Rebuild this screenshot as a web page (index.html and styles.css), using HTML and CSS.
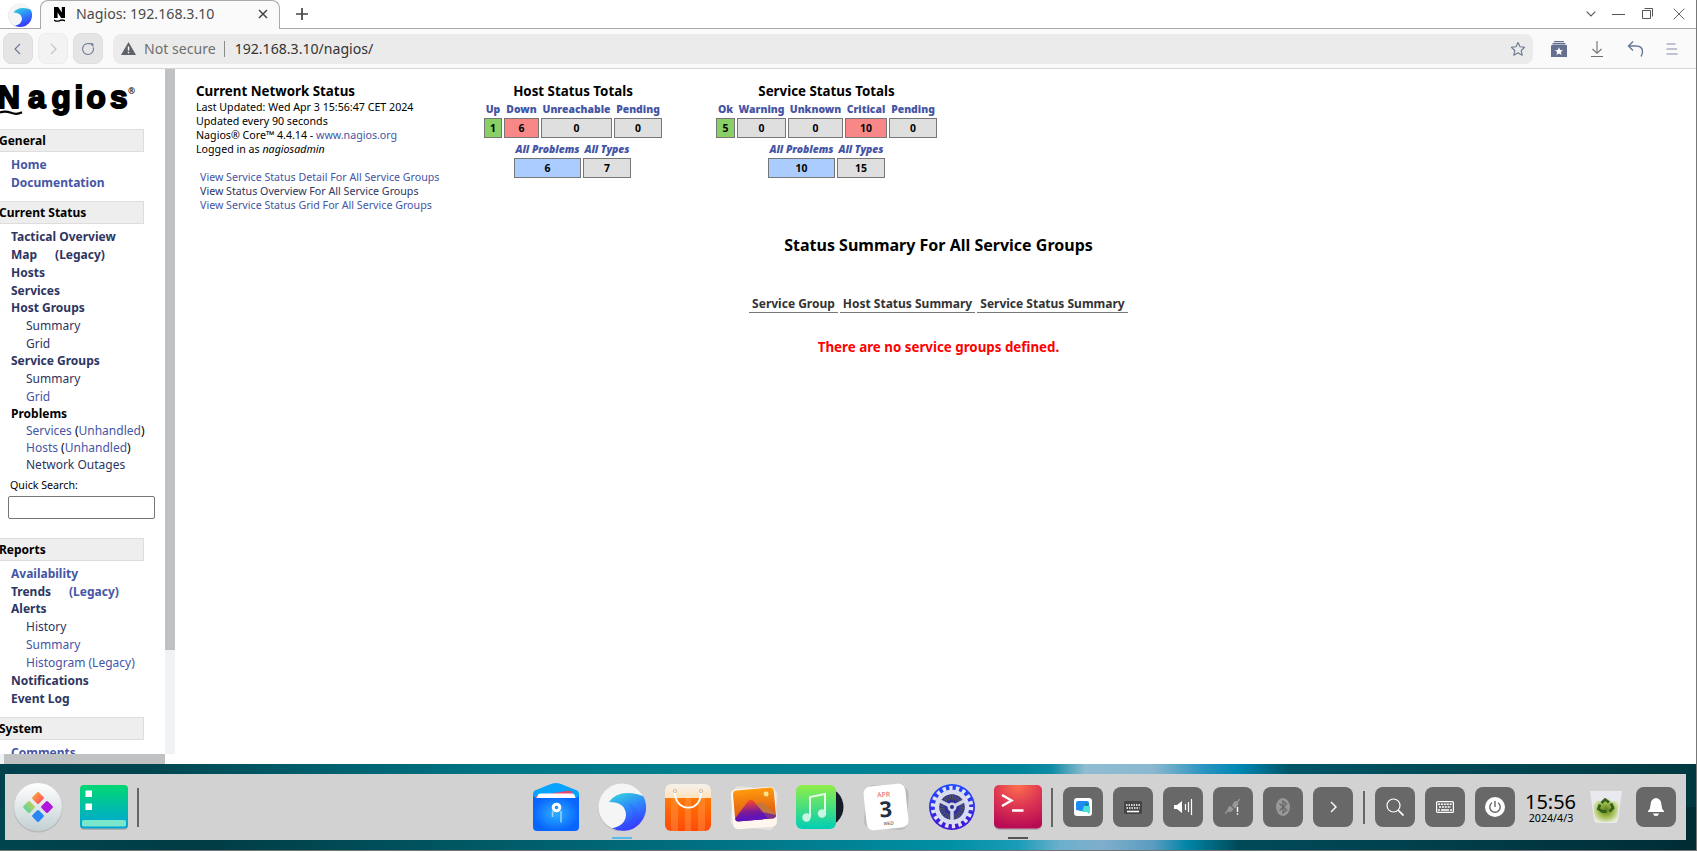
FILE: index.html
```
<!DOCTYPE html>
<html lang="en">
<head>
<meta charset="utf-8">
<title>Nagios: 192.168.3.10</title>
<link rel="stylesheet" href="styles.css">
</head>
<body>
<div class="window">
  <header class="tabstrip">
    <svg class="browser-logo" width="24" height="24" viewBox="0 0 48 48"><use href="#wave"/></svg>
    <div class="tab">
      <svg width="12" height="15" viewBox="0 0 12 15"><path d="M0 0h4.200l3.600 5.500V0H11v11H7.200L3.600 5.600V11H0zM0 12.500q3 1.600 5.500 .4t5.500 .2v1.300q-3-1.100-5.500 0T0 14z" fill="#000"/></svg>
      <span class="tab-title">Nagios: 192.168.3.10</span>
      <svg width="10" height="10" viewBox="0 0 10 10"><path d="M1 1l8 8M9 1l-8 8" stroke="#444" stroke-width="1.500"/></svg>
    </div>
    <svg class="newtab" width="12" height="12" viewBox="0 0 12 12"><path d="M6 0v12M0 6h12" stroke="#444" stroke-width="1.700"/></svg>
    <div class="wincontrols">
      <svg width="10" height="6" viewBox="0 0 10 6"><path d="M.7 .7L5 5L9.300 .7" fill="none" stroke="#555a62" stroke-width="1.200"/></svg>
      <svg width="13" height="12" viewBox="0 0 13 12"><path d="M0 6.500h13" stroke="#555"/></svg>
      <svg width="12" height="12" viewBox="0 0 12 12"><path d="M.5 2.500h8v8h-8zM2.500 .5h8v8" fill="none" stroke="#555"/></svg>
      <svg width="12" height="12" viewBox="0 0 12 12"><path d="M.7 .7l10.600 10.600M11.300 .7L.7 11.300" stroke="#666"/></svg>
    </div>
  </header>
  <div class="toolbar">
    <span class="navbtn"><svg width="10" height="12" viewBox="0 0 10 12"><path d="M7 1L2 6l5 5" fill="none" stroke="#68778f" stroke-width="1.100"/></svg></span>
    <span class="navbtn off"><svg width="10" height="12" viewBox="0 0 10 12"><path d="M3 1l5 5l-5 5" fill="none" stroke="#c0c4cc" stroke-width="1.100"/></svg></span>
    <span class="navbtn"><svg width="14" height="14" viewBox="0 0 14 14"><path d="M12.300 5.500A5.500 5.500 0 1 1 9.500 2.100" fill="none" stroke="#68778f" stroke-width="1.100"/><path d="M8.500 .8l3.800 .6v3.800z" fill="#68778f"/></svg></span>
    <div class="address">
      <svg width="15" height="13" viewBox="0 0 15 13"><path d="M7.500 0L15 13H0z" fill="#5f6368"/><path d="M7.500 4.500v4M7.500 9.700v1.500" stroke="#fff" stroke-width="1.400"/></svg>
      <span class="insecure">Not secure</span><span class="url">192.168.3.10/nagios/</span>
      <svg class="star" width="16" height="16" viewBox="0 0 16 16"><path d="M8 1.500l2 4.300 4.600.5-3.400 3.200 1 4.700L8 11.800l-4.200 2.400 1-4.700L1.400 6.300 6 5.800z" fill="none" stroke="#68778f" stroke-width="1.100" stroke-linejoin="round"/></svg>
    </div>
    <svg class="tb1" width="16" height="16" viewBox="0 0 16 16"><path d="M3 0h10v1.200H3zM1.500 2h13v1.500h-13zM0 5q0-1 1-1h14q1 0 1 1v11H0z" fill="#66708f"/><path d="M8 6.300l1.200 2.600 2.800.3-2.100 1.900.6 2.800L8 12.500l-2.500 1.400.6-2.800L4 9.200l2.800-.3z" fill="#fff"/></svg>
    <svg class="tb2" width="12" height="16" viewBox="0 0 12 16"><path d="M6 0v12M1.500 8L6 12.300 10.500 8M0 15.500h12" fill="none" stroke="#6c6f74" stroke-width="1.100"/></svg>
    <svg class="tb3" width="18" height="16" viewBox="0 0 18 16"><path d="M6 .5L1.500 5 6 9.500M1.500 5H9q6.500 0 6.500 5.500 0 3-1.500 5" fill="none" stroke="#68779a" stroke-width="1.400"/></svg>
    <svg class="tb4" width="12" height="12" viewBox="0 0 12 12"><path d="M.5 1h9M.5 6h6M.5 11h11M6 6h5" stroke="#a9b1c4" stroke-width="1.600"/></svg>
  </div>
  <div class="frames">
    <div class="side">
      <div class="sideframe">
        <nav class="sidebar">
          <svg class="logo" width="144" height="60" viewBox="0 0 144 60">
            <text class="logotext" y="38.500" font-size="31"><tspan x="-2.500">N</tspan><tspan x="28 51.500 74.500 86.500 110" font-size="31.500">agios</tspan></text>
            <path d="M0 43.500q5-2 11 .3t11-.5" fill="none" stroke="#000" stroke-width="2.200"/>
            <text class="logoreg" x="128" y="25">®</text>
          </svg>
          <h2>General</h2>
          <ul>
            <li><a>Home</a></li>
            <li><a>Documentation</a></li>
          </ul>
          <h2>Current Status</h2>
          <ul>
            <li class="seen"><a>Tactical Overview</a></li>
            <li class="seen"><a>Map</a><a class="legacy">(Legacy)</a></li>
            <li class="seen"><a>Hosts</a></li>
            <li class="seen tight"><a>Services</a></li>
            <li class="seen"><a>Host Groups</a></li>
            <li class="sub seen"><a>Summary</a></li>
            <li class="sub seen tight"><a>Grid</a></li>
            <li class="seen"><a>Service Groups</a></li>
            <li class="sub seen"><a>Summary</a></li>
            <li class="sub tight"><a>Grid</a></li>
            <li class="plain tight">Problems</li>
            <li class="sub tight"><a>Services</a> (<a>Unhandled</a>)</li>
            <li class="sub tight"><a>Hosts</a> (<a>Unhandled</a>)</li>
            <li class="sub seen tight"><a>Network Outages</a></li>
          </ul>
          <label class="search">Quick Search:<input type="text"></label>
          <h2>Reports</h2>
          <ul>
            <li><a>Availability</a></li>
            <li class="tight"><a class="visited">Trends</a><a class="legacy">(Legacy)</a></li>
            <li class="seen"><a>Alerts</a></li>
            <li class="sub seen"><a>History</a></li>
            <li class="sub"><a>Summary</a></li>
            <li class="sub"><a>Histogram (Legacy)</a></li>
            <li class="seen"><a>Notifications</a></li>
            <li class="seen"><a>Event Log</a></li>
          </ul>
          <h2>System</h2>
          <ul><li><a>Comments</a></li></ul>
        </nav>
        <div class="vscroll"><div class="vthumb"></div></div>
      </div>
      <div class="hscroll"><div class="hthumb"></div></div>
    </div>
    <main class="main">
      <div class="top">
        <section class="info">
          <h1>Current Network Status</h1>
          <p>Last Updated: Wed Apr 3 15:56:47 CET 2024</p>
          <p>Updated every 90 seconds</p>
          <p>Nagios® Core™ 4.4.14 - <a>www.nagios.org</a></p>
          <p>Logged in as <i>nagiosadmin</i></p>
          <div class="views">
            <p><a>View Service Status Detail For All Service Groups</a></p>
            <p class="seen"><a>View Status Overview For All Service Groups</a></p>
            <p><a>View Service Status Grid For All Service Groups</a></p>
          </div>
        </section>
        <section class="totals host">
          <h1>Host Status Totals</h1>
          <div class="grid main-grid">
            <b>Up</b><b>Down</b><b>Unreachable</b><b>Pending</b>
            <span class="ok">1</span><span class="bad">6</span><span>0</span><span>0</span>
          </div>
          <div class="grid sum-grid"><b>All Problems</b><b>All Types</b><span class="prob">6</span><span>7</span></div>
        </section>
        <section class="totals service">
          <h1>Service Status Totals</h1>
          <div class="grid main-grid">
            <b>Ok</b><b>Warning</b><b>Unknown</b><b>Critical</b><b>Pending</b>
            <span class="ok">5</span><span>0</span><span>0</span><span class="bad">10</span><span>0</span>
          </div>
          <div class="grid sum-grid"><b>All Problems</b><b>All Types</b><span class="prob">10</span><span>15</span></div>
        </section>
      </div>
      <h2 class="title">Status Summary For All Service Groups</h2>
      <div class="columns"><span>Service Group</span><span>Host Status Summary</span><span>Service Status Summary</span></div>
      <p class="error">There are no service groups defined.</p>
    </main>
  </div>
</div>
<div class="desktop">
  <div class="dock">
    <svg class="launcher" width="52" height="52" viewBox="0 0 52 52">
      <defs>
        <linearGradient id="lg" x2="0" y2="1"><stop offset="0" stop-color="#fff"/><stop offset="1" stop-color="#c3d0d3"/></linearGradient>
        <linearGradient id="or"><stop stop-color="#ff9a3c"/><stop offset="1" stop-color="#ff5a5f"/></linearGradient>
        <linearGradient id="gr" x2="0" y2="1"><stop stop-color="#b6d25c"/><stop offset="1" stop-color="#5fd39b"/></linearGradient>
      </defs>
      <circle cx="26" cy="27" r="24.500" fill="#aaa" opacity=".6"/><circle cx="26" cy="26" r="24" fill="url(#lg)"/>
      <rect x="-4.600" y="-4.600" width="9.200" height="9.200" rx="1.500" transform="translate(26 17) rotate(45)" fill="url(#or)"/>
      <rect x="-4.600" y="-4.600" width="9.200" height="9.200" rx="1.500" transform="translate(17 26) rotate(45)" fill="url(#gr)"/>
      <rect x="-4.600" y="-4.600" width="9.200" height="9.200" rx="1.500" transform="translate(35 26) rotate(45)" fill="#b115dc"/>
      <rect x="-4.600" y="-4.600" width="9.200" height="9.200" rx="1.500" transform="translate(26 35) rotate(45)" fill="#2a86f5"/>
    </svg>
    <svg class="multitask" width="48" height="48" viewBox="0 0 48 48">
      <defs><linearGradient id="mt" x2="0" y2="1"><stop stop-color="#00d873"/><stop offset=".8" stop-color="#00aec4"/><stop offset="1" stop-color="#009fd0"/></linearGradient></defs>
      <rect y="3" width="48" height="44" rx="4" fill="#999" opacity=".6"/><rect y="2" width="48" height="43.500" rx="4" fill="url(#mt)"/>
      <path d="M5.500 7.500h6.500v6.500H5.500zM5.500 20.500h6.500v6.500H5.500z" fill="#fff"/><rect x="2" y="37" width="44" height="6.500" rx="1.500" fill="#7ae6cb"/>
    </svg>
    <i class="sep s1"></i>
    <div class="apps">
      <svg width="48" height="50" viewBox="0 0 48 50">
        <defs><radialGradient id="fm"><stop stop-color="#2db0ff"/><stop offset="1" stop-color="#0866ff"/></radialGradient></defs>
        <path d="M1 12q0-3 3-4L19 2q5-2 10 0l15 6q3 1 3 4v10H1z" fill="#06a4ff"/>
        <path d="M4 14l30-5q4-1 6 1l3 6H3z" fill="#e8466c"/><path d="M6 13q0-1.500 3-1.500h31q3 0 3.500 5H4z" fill="#fff"/>
        <path d="M1 14l3 2h40l3-2v31q0 4-4 4H5q-4 0-4-4z" fill="url(#fm)"/><circle cx="24.500" cy="25.500" r="3.300" fill="none" stroke="#fff" stroke-width="3"/>
        <path d="M20.500 29v6M29 29v11.500" stroke="#9bd6ff" stroke-width="1.500"/>
      </svg>
      <svg width="48" height="48" viewBox="0 0 48 48">
        <defs>
          <linearGradient id="wg" x1=".2" x2=".6" y2="1"><stop stop-color="#35d0dc"/><stop offset=".45" stop-color="#2d86fb"/><stop offset="1" stop-color="#3a30ff"/></linearGradient>
          <g id="wave"><circle cx="24" cy="25" r="23.700" fill="#aaa" opacity=".5"/><circle cx="24" cy="24" r="23.500" fill="#f5f5f5"/><path d="M11 19Q17 10 30 10q9 0 15.500 3.500A23.500 23.500 0 0 1 14 45.300Q27 43 28 32 27.500 19 11 19z" fill="url(#wg)"/></g>
        </defs>
        <use href="#wave"/><path d="M30 20q7 8 4 15-4 8-14 12 7 1 12-1 7-5 8-14 0-8-10-12z" fill="#2855ff" opacity=".25"/>
      </svg>
      <svg width="48" height="48" viewBox="0 0 48 48">
        <defs><linearGradient id="st" x2="0" y2="1"><stop stop-color="#ff8a05"/><stop offset="1" stop-color="#ff4a08"/></linearGradient><linearGradient id="cr" x2="0" y2="1"><stop stop-color="#f4f1ec"/><stop offset="1" stop-color="#ffe3bd"/></linearGradient></defs>
        <rect x="1" y="2" width="46" height="46" rx="6" fill="url(#st)"/><path d="M7 15h7v33H7zM21 15h6v33h-6zM34 15h7v33h-7z" fill="#ff9d4a" opacity=".4"/>
        <path d="M1 15V8q0-7 7-7h32q7 0 7 7v7z" fill="url(#cr)"/><path d="M11 7c-2 23 28 24 26 0" fill="none" stroke="#fff" stroke-width="1.800"/><circle cx="11" cy="8" r="1.500" fill="none" stroke="#c9b9a5"/><circle cx="37" cy="8" r="1.500" fill="none" stroke="#c9b9a5"/>
      </svg>
      <svg width="48" height="48" viewBox="0 0 48 48">
        <defs><linearGradient id="ph" x2="0" y2="1"><stop stop-color="#ff9a0c"/><stop offset="1" stop-color="#d94f18"/></linearGradient><linearGradient id="mo" x2="0" y2="1"><stop stop-color="#ff4a24"/><stop offset=".6" stop-color="#7a1a9a"/><stop offset="1" stop-color="#5510c0"/></linearGradient></defs>
        <rect x="2" y="5" width="44" height="40" rx="5" transform="rotate(7 24 25)" fill="#e7e2df"/>
        <rect x="2" y="5" width="44" height="40" rx="5" transform="rotate(-4 24 25)" fill="#fff6ee"/>
        <g transform="rotate(-5 24 22)"><rect x="4" y="6" width="41" height="31" rx="4" fill="url(#ph)"/><path d="M14 36l14-15q3-3 5 0l12 12v1q0 3-4 3z" fill="#c4763c"/><path d="M4 34l14-16q3-3 6 0l13 19H7q-3 0-3-3z" fill="url(#mo)"/><path d="M5 36l6-4 13 2 9-4 12 4v0q0 3-4 3H8z" fill="#6314b8" opacity=".7"/><circle cx="37" cy="12" r="2.500" fill="#ffe38a"/></g>
      </svg>
      <svg width="48" height="48" viewBox="0 0 48 48">
        <defs><linearGradient id="mu" x2="0" y2="1"><stop stop-color="#8fee48"/><stop offset="1" stop-color="#02ceb4"/></linearGradient></defs>
        <circle cx="27" cy="24" r="20.500" fill="#151c28"/><rect x="0" y="2" width="40" height="44" rx="6" fill="url(#mu)"/>
        <path d="M14 34V14l15-3v19" fill="none" stroke="#e2fbe9" stroke-width="2"/><circle cx="10.500" cy="34.500" r="4.200" fill="#c9f5e4"/><circle cx="26" cy="30.500" r="4.200" fill="#c9f5e4"/>
      </svg>
      <svg width="48" height="48" viewBox="0 0 48 48">
        <rect x="3" y="3" width="43" height="43" rx="7" transform="rotate(3 24 24)" fill="#b9b9b9"/><rect x="3" y="2" width="42" height="44" rx="7" transform="rotate(-6 24 24)" fill="#fff"/>
        <g transform="rotate(-4 24 24)" text-anchor="middle" class="cal"><text x="22.500" y="14" font-size="7" fill="#e05c5c">APR</text><text x="23.500" y="34" font-size="22" font-weight="bold" fill="#223047">3</text><text x="25.500" y="42" font-size="4.500" fill="#333">WED</text></g>
      </svg>
      <svg width="48" height="48" viewBox="0 0 48 48">
        <defs><linearGradient id="gb" x2="0" y2="1"><stop stop-color="#1f4dff"/><stop offset="1" stop-color="#4515d6"/></linearGradient></defs>
        <circle cx="24" cy="24" r="23" fill="url(#gb)"/><circle cx="24" cy="24" r="19" fill="none" stroke="#dfe3ef" stroke-width="4.500" stroke-dasharray="3.300 3.333"/><circle cx="24" cy="24" r="15" fill="#2f2fa0" stroke="#d8dcec" stroke-width="4.500"/>
        <circle cx="24" cy="24" r="10" fill="none" stroke="#50535f" stroke-width="5" stroke-dasharray="1.600 1"/>
        <path d="M24 24v13M24 24L12 18M24 24l12-6" stroke="#cfd4e6" stroke-width="3.500"/><circle cx="24" cy="24" r="4.500" fill="#cfd4e6"/><circle cx="24" cy="24" r="2" fill="#2a2c8c"/>
      </svg>
      <svg width="48" height="48" viewBox="0 0 48 48">
        <defs><radialGradient id="te" cy="0" r="1"><stop stop-color="#ff704c"/><stop offset=".5" stop-color="#dc3652"/><stop offset="1" stop-color="#b80a55"/></radialGradient></defs>
        <rect y="3" width="48" height="44" rx="5" fill="#999" opacity=".6"/><rect y="2" width="48" height="43.500" rx="5" fill="url(#te)"/><path d="M8 12l9.500 5.500L8 23M18 27.500h11.500" fill="none" stroke="#fff" stroke-width="2.400"/>
      </svg>
    </div>
    <i class="sep s2"></i>
    <div class="tray">
      <span><svg width="18" height="18" viewBox="0 0 18 18"><rect width="18" height="18" rx="3" fill="#fff"/><path d="M2 5q0-2 2-2h9q2 0 2 2v8H7l-5-1z" fill="#1c8cf2"/><path d="M10 8h6v6l-1 2-2-2H8z" fill="#4be0d8"/><circle cx="12.500" cy="6.500" r="1" fill="#083"/></svg></span>
      <span><svg width="18" height="13" viewBox="0 0 18 13"><rect width="18" height="13" rx="1.500" fill="#454545"/><path d="M2 4h14M2.500 7h13" stroke="#fff" stroke-width="1.600" stroke-dasharray="1.500 1"/><path d="M3 10.500h12" stroke="#fff" stroke-width="1.600"/></svg></span>
      <span><svg width="19" height="16" viewBox="0 0 19 16"><path d="M0 6h3l5-4v12l-5-4H0z" fill="#fff"/><path d="M11.500 5v6M14.500 3v10M17.500 0v16" stroke="#fff" stroke-width="1.200"/></svg></span>
      <span><svg width="16" height="16" viewBox="0 0 16 16"><path d="M0 14.500l4-4M11 4l4-4" stroke="#999" stroke-width="1.300"/><path d="M2.500 11.500q0-4 3-4.500l3 3q-1 3-4.500 3zM7 6.500l3 3 2.500-2.500q1.500-3 .5-4.500-2-1-4 .5z" fill="#999"/><path d="M12.500 8v5M12.500 14.200v1.600" stroke="#fff" stroke-width="1.400"/></svg></span>
      <span><svg width="14" height="18" viewBox="0 0 14 18"><ellipse cx="7" cy="9" rx="7" ry="9" fill="#999"/><path d="M3.500 5.500l7 6.500L7 15V3l3.500 3-7 6.500" fill="none" stroke="#666" stroke-width="1.200"/></svg></span>
      <span><svg width="7" height="12" viewBox="0 0 7 12"><path d="M1 1l5 5-5 5" fill="none" stroke="#fff" stroke-width="1.400"/></svg></span>
    </div>
    <i class="sep s3"></i>
    <div class="tray">
      <span><svg width="18" height="18" viewBox="0 0 18 18"><circle cx="7.500" cy="7.500" r="6.500" fill="none" stroke="#fff" stroke-width="1.200"/><path d="M12 12l5.500 5.500" stroke="#fff" stroke-width="1.700"/></svg></span>
      <span><svg width="18" height="12" viewBox="0 0 18 12"><rect x=".6" y=".6" width="16.800" height="10.800" rx="1" fill="none" stroke="#fff" stroke-width="1.200"/><path d="M2 3.200h14M3 6h12" stroke="#fff" stroke-width="1.600" stroke-dasharray="2 .9"/><path d="M2 9h2M5 9h8M14 9h2" stroke="#fff" stroke-width="1.600"/></svg></span>
      <span><svg width="20" height="20" viewBox="0 0 20 20"><circle cx="10" cy="10" r="10" fill="#fff"/><path d="M7 5.800a5.200 5.200 0 1 0 6 0M10 4v6" fill="none" stroke="#666" stroke-width="1.400"/></svg></span>
    </div>
    <div class="clock"><span class="time">15:56</span><span class="date">2024/4/3</span></div>
    <svg class="trash" width="32" height="34" viewBox="0 0 32 34">
      <defs><radialGradient id="tr" cy=".5" r=".55"><stop stop-color="#587a1c"/><stop offset=".5" stop-color="#9dba48"/><stop offset="1" stop-color="#e6ecd2"/></radialGradient></defs>
      <path d="M0 1h32l-4 29q-.5 3-4 3H8q-3.500 0-4-3z" fill="#e9eaf0"/><path d="M3 14l4-4 5 2 5-4 5 4 6-2 1 5-2 14q-.500 3-4 3H9q-3 0-4-3z" fill="url(#tr)"/>
      <path d="M11.500 13l3.500-3.500 4 3M21 13.500l2 4.500-3.500 3.500M10 14.500L8.500 19l4 2.500h4" fill="none" stroke="#34601a" stroke-width="2.800"/>
    </svg>
    <div class="tray"><span><svg width="16" height="18" viewBox="0 0 16 18"><path d="M8 0q5.500 1 5.500 7 0 4 2.500 6v1H0v-1q2.500-2 2.500-6Q2.500 1 8 0zM5 15.500h6Q10.500 18 8 18t-3-2.500z" fill="#fff"/></svg></span></div>
    <i class="mark m1"></i><i class="mark m2"></i>
  </div>
</div>
</body>
</html>
```
FILE: styles.css
```
* { box-sizing: border-box; }
body { margin: 0; width: 1697px; height: 852px; overflow: hidden; background: #fff; font-family: "Noto Sans", sans-serif; color: #000; }
h1, h2, p, ul { margin: 0; padding: 0; }
svg { display: block; flex: none; }
.window { height: 764px; display: flex; flex-direction: column; border-right: 1px solid #777; }

.tabstrip { height: 29px; flex: none; display: flex; align-items: center; border-bottom: 1px solid #aaa; }
.browser-logo { margin: 2px 8px 0; }
.tab { height: 29px; width: 240px; margin-bottom: -1px; padding: 0 11px 2px 13px; display: flex; align-items: center; background: #fafafa; border: 1px solid #aaa; border-bottom: 0; border-radius: 8px 8px 0 0; }
.tab-title { font-size: 14.200px; flex: 1; margin-left: 10px; margin-top: -1px; white-space: nowrap; color: #4a4a4a; }
.newtab { margin-left: 16px; }
.wincontrols { margin-left: auto; display: flex; align-items: center; gap: 17px; padding-right: 11px; }
.wincontrols svg:first-child { margin-right: -1px; }
.wincontrols svg:last-child { margin-left: 2px; }

.toolbar { height: 40px; flex: none; display: flex; align-items: center; background: #fafafa; border-bottom: 1px solid #d5d6db; padding-left: 3px; }
.navbtn { width: 30px; height: 31px; margin-right: 5px; border-radius: 8px; background: #e5e5e5; border: 1px solid #dedede; display: flex; align-items: center; justify-content: center; }
.navbtn.off { background: #f3f3f3; border-color: #ececec; }
.address { width: 1420px; height: 30px; margin-left: 5px; margin-right: 18px; border-radius: 8px; background: #ebebeb; display: flex; align-items: center; padding: 0 7px 0 8px; font-size: 14px; }
.insecure { margin-left: 8px; padding-right: 8px; font-size: 14.100px; color: #6f6f6f; border-right: 1px solid #8a8a8a; line-height: 16px; white-space: nowrap; }
.url { margin-left: 10px; font-size: 14.100px; color: #333; }
.star { margin-left: auto; }
.tb2 { margin-left: 24px; }
.tb3 { margin-left: 24px; }
.tb4 { margin-left: 21px; }

.frames { flex: 1; min-height: 0; display: flex; }
.side { width: 175px; flex: none; display: flex; flex-direction: column; }
.sideframe { flex: 1; min-height: 0; display: flex; }
.sidebar { width: 165px; overflow: hidden; font-size: 12px; }
.logo { overflow: visible; }
.logotext { font-family: "Liberation Sans", sans-serif; font-weight: bold; stroke: #000; stroke-width: 1.900px; stroke-linejoin: round; }
.logoreg { font-size: 8.500px; font-weight: bold; }
.sidebar h2 { width: 145px; height: 23px; margin-left: -1px; background: #eee; border: 1px solid #ddd; font-size: 12px; line-height: 21px; text-indent: -1px; }
.sidebar ul { list-style: none; padding: 4px 0 0 11px; margin-bottom: 9px; }
.sidebar li { height: 18px; line-height: 17px; font-weight: bold; white-space: nowrap; }
.sidebar li.tight { height: 17px; }
.sidebar li.sub { padding-left: 15px; font-weight: normal; }
a { color: #4555a5; }
.seen a, a.visited { color: #2d3561; }
.sidebar a.legacy { margin-left: 18px; }
.search { display: block; margin-top: -4px; padding-left: 10px; font-size: 10.667px; line-height: 15px; }
.search input { display: block; width: 147px; height: 23px; margin: 3px 0 19px -2px; border: 1px solid #767676; border-radius: 2px; background: #fff; }
.vscroll { width: 10px; background: #f1f2f4; }
.vthumb { height: 581px; background: #c0c1c3; }
.hscroll { height: 10px; width: 165px; flex: none; background: #f1f2f4; padding-left: 4px; }
.hthumb { height: 10px; background: #c0c1c3; }

.main { flex: 1; display: flex; flex-direction: column; padding: 14px 0 0 21px; }
.top { display: flex; height: 139px; }
.info { width: 288px; font-size: 10.667px; line-height: 14px; white-space: nowrap; }
h1 { font-size: 13.333px; line-height: 17px; white-space: nowrap; }
.views { padding: 14px 0 0 4px; }
.totals { display: flex; flex-direction: column; align-items: center; font-size: 10.400px; font-weight: bold; }
.totals.host { width: 178px; margin-right: 54px; }
.totals.service { width: 221px; }
.grid { display: grid; column-gap: 2px; grid-template-rows: 18px 20px; text-align: center; }
.grid b { line-height: 18px; color: #4555a5; white-space: nowrap; }
.grid span { border: 1px solid #777; background: #dfdfdf; line-height: 18px; }
.grid .ok { background: #88d066; }
.grid .bad { background: #f88888; }
.grid .prob { background: #aaccff; }
.host .main-grid { grid-template-columns: 18px 35px 71px 48px; }
.service .main-grid { grid-template-columns: 19px 49px 55px 42px 48px; }
.sum-grid { grid-template-columns: 67px 48px; margin-top: 2px; }
.host .sum-grid { margin-right: 1px; }
.sum-grid b { font-style: italic; }
.title { width: 1485px; font-size: 16px; line-height: 22px; margin-top: 12px; text-align: center; }
.columns { width: 1485px; margin-top: 39px; display: flex; gap: 2px; justify-content: center; font-size: 12px; font-weight: bold; color: #333; line-height: 17px; }
.columns span { border-bottom: 1px solid #777; text-align: center; padding-bottom: 1px; height: 18px; }
.columns span:nth-child(1) { width: 89px; }
.columns span:nth-child(2) { width: 135px; }
.columns span:nth-child(3) { width: 151px; }
.error { width: 1485px; margin-top: 25px; text-align: center; font-size: 13.333px; line-height: 18px; font-weight: bold; color: #f00; }

.desktop { height: 87px; padding: 10px 10px 10px 5px; border-right: 1px solid #777; border-bottom: 1px solid #777; background: linear-gradient(90deg, #00414d 0, #004650 9%, #005a68 17%, #007686 29%, #008090 41%, #008499 60%, #0e8ca5 62%, #90bdd2 64%, #8ab8d0 68%, #2a94c0 71%, #0088b4 73%, #005668 76%, #004e5c 82%, #003840) 0 0 / 100% 43px no-repeat, linear-gradient(90deg, #00454f 0, #003c44 12%, #005560 26%, #007080 41%, #0090a4 56%, #1a9cb8 60%, #6ab0cc 62.500%, #80aecb 65%, #5a9cc0 68%, #0085a8 70%, #004a58 73%, #00424e 82%, #002c34); }
.dock { position: relative; height: 66px; background: #d2d2d2; display: flex; align-items: center; }
.launcher { margin-left: 7px; }
.multitask { margin-left: 16px; }
.sep { width: 2px; height: 39px; background: #666; }
.s1 { margin-left: 9px; }
.apps { display: flex; gap: 18px; align-items: center; margin-left: 393px; }
.s2 { margin-left: 9px; margin-right: 10px; }
.s3 { height: 33px; margin: 0 10px; }
.tray { display: flex; gap: 10px; }
.tray span { width: 40px; height: 40px; border-radius: 8px; background: #686868; display: flex; align-items: center; justify-content: center; }
.clock { width: 73px; margin-right: 2px; display: flex; flex-direction: column; align-items: center; }
.time { font-size: 20px; line-height: 23px; margin-left: -2px; }
.date { font-size: 10.667px; line-height: 11px; margin-left: -1px; }
.trash { margin-right: 14px; }
.mark { position: absolute; bottom: 1px; width: 20px; height: 2px; background: #555; }
.m1 { left: 607px; background: #5ab9ee; }
.m2 { left: 1003px; }
.cal { font-family: "Noto Sans", sans-serif; }
```
